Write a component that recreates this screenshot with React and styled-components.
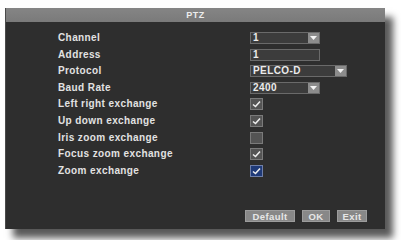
import styled, { createGlobalStyle } from 'styled-components'

const GlobalStyle = createGlobalStyle`
   html, body {
      margin: 0;
      padding: 0;
      background: #ffffff;
   }
   body {
      font-family: "Liberation Sans", Arial, sans-serif;
   }
`

const rows = [
   { label: 'Channel', type: 'select', value: '1', width: 70 },
   { label: 'Address', type: 'input', value: '1', width: 70 },
   { label: 'Protocol', type: 'select', value: 'PELCO-D', width: 97 },
   { label: 'Baud Rate', type: 'select', value: '2400', width: 70 },
   { label: 'Left right exchange', type: 'check', checked: true },
   { label: 'Up down exchange', type: 'check', checked: true },
   { label: 'Iris zoom exchange', type: 'check', checked: false },
   { label: 'Focus zoom exchange', type: 'check', checked: true },
   { label: 'Zoom exchange', type: 'check', checked: true, focused: true },
]

function CheckMark() {
   return (
      <svg width="9" height="8" viewBox="0 0 9 8">
         <path d="M1 4.5 L3.5 6.5 L8 1.5" fill="none" stroke="#eeeeee" strokeWidth="1.6" />
      </svg>
   )
}

function Control({ row }) {
   if (row.type === 'check') {
      return <CheckBox $focused={row.focused}>{row.checked && <CheckMark />}</CheckBox>
   }
   return (
      <Field $width={row.width}>
         <FieldText>{row.value}</FieldText>
         {row.type === 'select' && (
            <ArrowBox>
               <svg width="7" height="4" viewBox="0 0 7 4">
                  <path d="M0 0 H7 L3.5 4 Z" fill="#f4f4f4" />
               </svg>
            </ArrowBox>
         )}
      </Field>
   )
}

export default function App() {
   return (
      <>
         <GlobalStyle />
         <Page>
            <Window>
               <TitleBar>PTZ</TitleBar>
               <Body>
                  <Form>
                     {rows.map((row) => (
                        <Row key={row.label}>
                           <Label>{row.label}</Label>
                           <Control row={row} />
                        </Row>
                     ))}
                  </Form>
                  <Buttons>
                     <Button>Default</Button>
                     <Button $width={28}>OK</Button>
                     <Button $width={30}>Exit</Button>
                  </Buttons>
               </Body>
            </Window>
         </Page>
      </>
   )
}

const Page = styled.div`
   width: 401px;
   height: 240px;
   padding: 8px 0 0 5px;
   box-sizing: border-box;
   overflow: hidden;
`

const Window = styled.div`
   width: 380px;
   height: 221px;
   display: flex;
   flex-direction: column;
   background: #2e2e2e;
   box-shadow: 8px 9px 7px rgba(0, 0, 0, 0.65);
   border-left: 1px solid #4a4a4a;
   box-sizing: border-box;
`

const TitleBar = styled.div`
   height: 14px;
   flex: none;
   background: linear-gradient(#858585, #7a7a7a);
   color: #ececec;
   font-size: 9px;
   font-weight: bold;
   letter-spacing: 0.5px;
   display: flex;
   align-items: center;
   justify-content: center;
`

const Body = styled.div`
   flex: 1;
   display: flex;
   flex-direction: column;
   padding: 10px 18px 7px 52px;
`

const Form = styled.div`
   display: grid;
   grid-auto-rows: 16.6px;
`

const Row = styled.div`
   display: grid;
   grid-template-columns: 192px auto;
   align-items: start;
`

const Label = styled.span`
   color: #e2e2e2;
   font-size: 10px;
   font-weight: bold;
   letter-spacing: 0.4px;
   line-height: 12px;
`

const Field = styled.div`
   width: ${({ $width }) => $width}px;
   height: 12px;
   box-sizing: border-box;
   border: 1px solid #6a6a6a;
   background: #3c3c3c;
   display: flex;
   align-items: center;
   justify-content: space-between;
`

const FieldText = styled.span`
   color: #ebebeb;
   font-size: 10px;
   font-weight: bold;
   letter-spacing: 0.4px;
   padding-left: 2px;
   line-height: 10px;
`

const ArrowBox = styled.div`
   width: 11px;
   height: 10px;
   background: #8c8c8c;
   display: flex;
   align-items: center;
   justify-content: center;
`

const CheckBox = styled.div`
   width: 13px;
   height: 12px;
   box-sizing: border-box;
   border: 1px solid ${({ $focused }) => ($focused ? '#6f7fa8' : '#7a7a7a')};
   background: ${({ $focused }) => ($focused ? '#1f3a78' : '#545454')};
   display: flex;
   align-items: center;
   justify-content: center;
`

const Buttons = styled.div`
   margin-top: auto;
   display: flex;
   justify-content: flex-end;
   gap: 7px;
`

const Button = styled.div`
   width: ${({ $width }) => $width || 50}px;
   height: 12px;
   box-sizing: border-box;
   background: #888888;
   border: 1px solid #9c9c9c;
   color: #e6e6e6;
   font-size: 9.5px;
   font-weight: bold;
   letter-spacing: 0.4px;
   display: flex;
   align-items: center;
   justify-content: center;
`
